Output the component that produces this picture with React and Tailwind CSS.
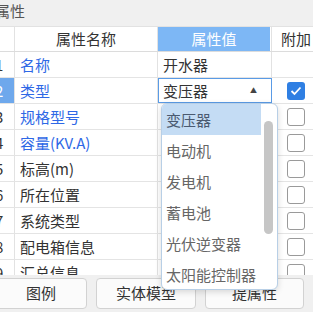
import React from 'react';

const rows = [
    { no: 1, name: '名称', value: '开水器', link: true, check: null },
    { no: 2, name: '类型', value: '变压器', link: true, check: true, active: true },
    { no: 3, name: '规格型号', value: '', link: true, check: false },
    { no: 4, name: '容量(KV.A)', value: '', link: true, check: false },
    { no: 5, name: '标高(m)', value: '', link: false, check: false },
    { no: 6, name: '所在位置', value: '', link: false, check: false },
    { no: 7, name: '系统类型', value: '', link: false, check: false },
    { no: 8, name: '配电箱信息', value: '', link: false, check: false },
    { no: 9, name: '汇总信息', value: '', link: false, check: false },
];

const options = ['变压器', '电动机', '发电机', '蓄电池', '光伏逆变器', '太阳能控制器'];

const CheckBox = ({ checked }) => {
    if (checked === null) return null;
    if (checked) {
        return (
            <div className="w-[18px] h-[18px] rounded-[3px] bg-[#2f7fe3] flex items-center justify-center">
                <svg width="12" height="10" viewBox="0 0 12 10">
                    <path d="M1.5 5 L4.5 8 L10.5 1.5" fill="none" stroke="white" strokeWidth="1.8" />
                </svg>
            </div>
        );
    }
    return <div className="w-[18px] h-[18px] rounded-[3px] border border-[#9a9a9a] bg-white" />;
};

const App = () => {
    return (
        <div
            className="relative w-[313px] h-[312px] overflow-hidden bg-[#f0f0f0] text-[15px] text-[#333]"
            style={{ fontFamily: '"Noto Sans CJK SC", "Noto Sans", sans-serif' }}
        >
            {/* title */}
            <div className="h-[26px] -ml-[5px] leading-[22px] text-[#555]">属性</div>

            {/* table */}
            <div className="-ml-[5px] w-[340px] bg-white border-t border-[#e2e2e2]">
                <div className="flex h-[25px] border-b border-[#dcdcdc] leading-[24px]">
                    <div className="w-[20px] border-r border-[#e2e2e2]" />
                    <div className="w-[143px] border-r border-[#e2e2e2] text-center">属性名称</div>
                    <div className="w-[112px] bg-[#7db7f5] text-white text-center">属性值</div>
                    <div className="w-[2px] bg-white border-r border-[#e2e2e2]" />
                    <div className="flex-1 pl-[9px]">附加</div>
                </div>
                <div className="h-[223px] overflow-hidden">
                    {rows.map((row) => (
                        <div key={row.no} className="flex h-[26px] border-b border-[#e4e4e4] leading-[25px]">
                            <div
                                className={
                                    row.active
                                        ? 'w-[20px] border-r border-[#e2e2e2] bg-[#6ea8ec] text-white'
                                        : 'w-[20px] border-r border-[#e2e2e2]'
                                }
                            >
                                {row.no}
                            </div>
                            <div
                                className={
                                    row.link
                                        ? 'w-[143px] border-r border-[#e2e2e2] pl-[5px] text-[#2e68e6]'
                                        : 'w-[143px] border-r border-[#e2e2e2] pl-[5px]'
                                }
                            >
                                {row.name}
                            </div>
                            {row.active ? (
                                <div className="w-[114px] border border-[#5a9be6] flex items-center justify-between pl-[4px] pr-[14px] leading-[23px]">
                                    <span>{row.value}</span>
                                    <span className="text-[7px] text-[#444]">▲</span>
                                </div>
                            ) : (
                                <div className="w-[114px] border-r border-[#e2e2e2] pl-[5px]">{row.value}</div>
                            )}
                            <div className="flex-1 pl-[15px] flex items-center">
                                <CheckBox checked={row.check} />
                            </div>
                        </div>
                    ))}
                </div>
            </div>

            {/* buttons */}
            <div className="flex gap-[9px] -ml-[5px] pt-[3px]">
                <button className="w-[92px] h-[31px] rounded-[4px] border border-[#d2d2d2] bg-[#fbfbfb] text-[#333]">图例</button>
                <button className="w-[100px] h-[31px] rounded-[4px] border border-[#d2d2d2] bg-[#fbfbfb] text-[#333]">实体模型</button>
                <button className="w-[99px] h-[31px] rounded-[4px] border border-[#d2d2d2] bg-[#fbfbfb] text-[#333]">提属性</button>
            </div>

            {/* dropdown list */}
            <div className="absolute left-[161px] top-[103px] w-[117px] h-[187px] bg-white rounded-[6px] border border-[#b8cfe6] shadow-[0_2px_6px_rgba(0,0,0,0.15)] overflow-hidden">
                <div className="flex">
                    <div className="w-[99px]">
                        {options.map((opt, i) => (
                            <div
                                key={opt}
                                className={
                                    i === 0
                                        ? 'h-[31px] leading-[31px] pl-[4px] bg-[#c4dcf4] text-[#4a5a70]'
                                        : 'h-[31px] leading-[31px] pl-[4px] text-[#666]'
                                }
                            >
                                {opt}
                            </div>
                        ))}
                    </div>
                    <div className="pl-[3px] pt-[17px]">
                        <div className="w-[9px] h-[113px] rounded-full bg-[#c6c6c6]" />
                    </div>
                </div>
            </div>
        </div>
    );
};

export default App;
